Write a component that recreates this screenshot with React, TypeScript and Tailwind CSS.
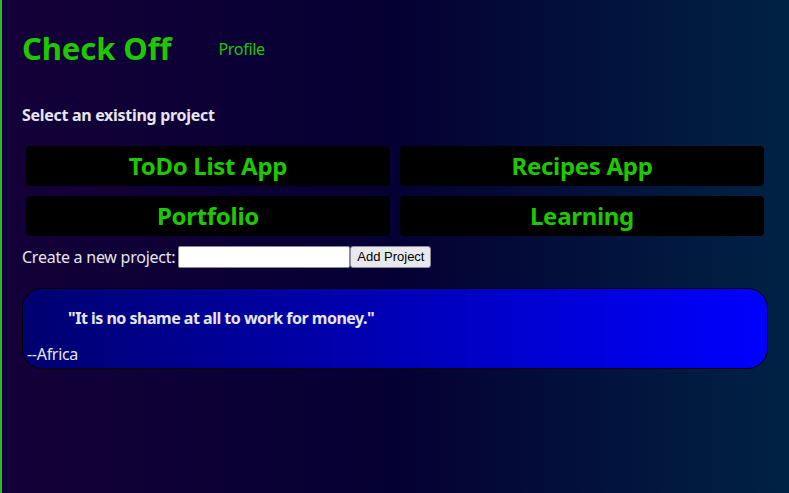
import React from 'react';

const projects = ['ToDo List App', 'Recipes App', 'Portfolio', 'Learning'];

export default function App() {
  return (
    <div
      className="min-h-[493px] border-l-2 border-[#2fb82f] bg-[linear-gradient(to_right,#140038_0%,#050033_50%,#002244_100%)] pl-5 pr-[21px] text-[#e6e6ee]"
      style={{ fontFamily: '"Noto Sans", "Open Sans", sans-serif' }}
    >
      <header className="flex h-[98px] items-center pb-[1px]">
        <h1 className="text-[31px] font-bold leading-none tracking-[-0.1px] text-[#1ec800]">Check Off</h1>
        <a href="#" className="ml-[47px] mt-[1px] text-base tracking-[-0.3px] text-[#1ec800]">
          Profile
        </a>
      </header>

      <h2 className="flex h-[34px] items-center text-base font-bold tracking-[-0.3px]">Select an existing project</h2>

      <div className="mt-[14px] grid grid-cols-2 gap-[10px] px-1">
        {projects.map((p) => (
          <button
            key={p}
            className="flex h-10 items-center justify-center rounded-[4px] bg-black text-2xl font-bold tracking-[-0.3px] text-[#1ec800]"
          >
            {p}
          </button>
        ))}
      </div>

      <div className="mt-[10px] flex h-[22px] items-center">
        <label className="text-base tracking-[-0.25px]">Create a new project:</label>
        <input className="ml-[3px] h-[22px] w-[172px] rounded-[2px] border border-[#8a8a9a] bg-white" />
        <button
          className="h-[22px] rounded-[3px] border border-[#8a8a9a] bg-[#e9e9ed] px-[6px] text-[13px] text-black"
          style={{ fontFamily: '"Liberation Sans", sans-serif' }}
        >
          Add Project
        </button>
      </div>

      <div className="mt-[20px] h-[81px] rounded-[20px] border border-black bg-[linear-gradient(to_right,#000070,#0000ff)] pl-1">
        <p className="pl-[41px] pt-[17px] text-base font-bold tracking-[-0.5px]">
          "It is no shame at all to work for money."
        </p>
        <p className="mt-[12px] text-base tracking-[-0.3px]">--Africa</p>
      </div>
    </div>
  );
}
